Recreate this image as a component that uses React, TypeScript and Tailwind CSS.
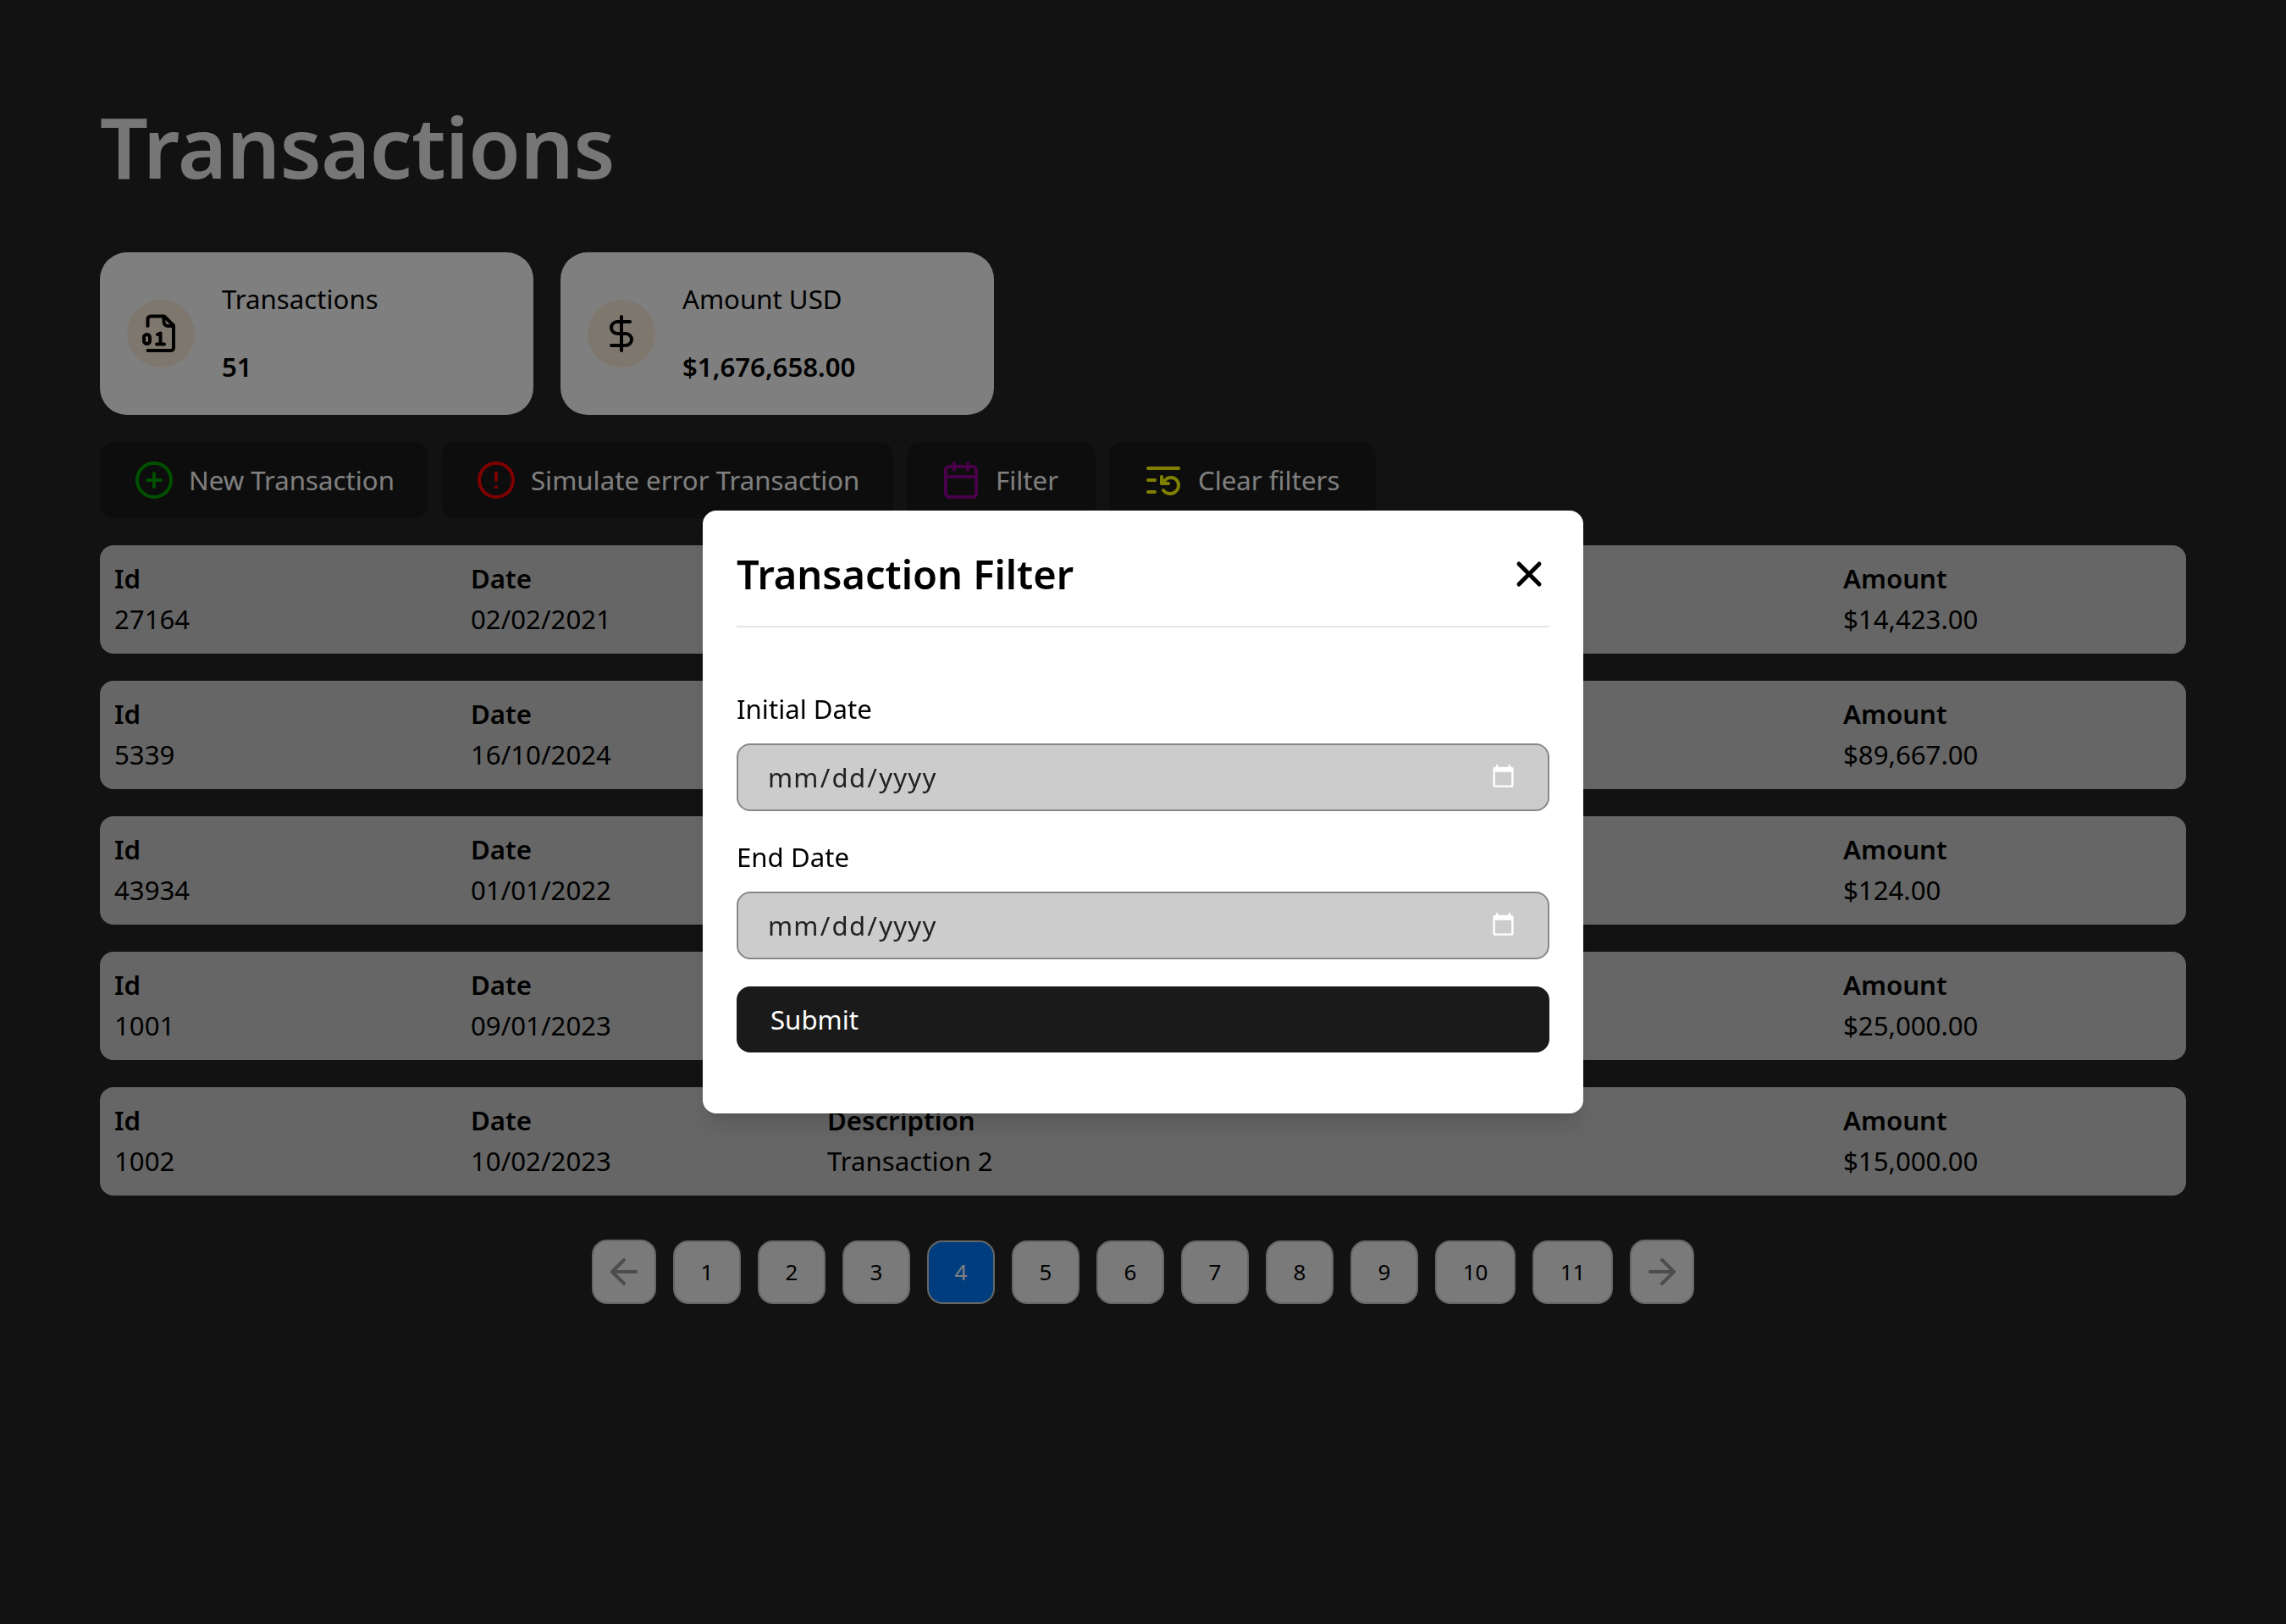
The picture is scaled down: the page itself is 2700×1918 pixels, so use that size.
import { ArrowLeft, ArrowRight, Calendar, CircleAlert, CirclePlus, DollarSign, ListRestart, X } from 'lucide-react';

const transactions = [
  { id: '27164', date: '02/02/2021', description: 'Transaction 27164', amount: '$14,423.00' },
  { id: '5339', date: '16/10/2024', description: 'Transaction 5339', amount: '$89,667.00' },
  { id: '43934', date: '01/01/2022', description: 'Transaction 43934', amount: '$124.00' },
  { id: '1001', date: '09/01/2023', description: 'Transaction 1', amount: '$25,000.00' },
  { id: '1002', date: '10/02/2023', description: 'Transaction 2', amount: '$15,000.00' },
];

const pages = ['1', '2', '3', '4', '5', '6', '7', '8', '9', '10', '11'];

function FileBinaryIcon() {
  return (
    <svg width="48" height="48" viewBox="0 0 48 48" fill="none" stroke="currentColor" strokeWidth="4" strokeLinecap="round" strokeLinejoin="round">
      <path d="M8.5 15V7A3.5 3.5 0 0 1 12 3.5H28L39 14.5V41a3 3 0 0 1-3 3H8.5" />
      <path d="M27.5 4v6a5 5 0 0 0 5 5h6.5" />
      <rect x="4" y="25" width="7" height="11" rx="3.5" />
      <path d="M20 25l3.5-1.5V36M19 36.5h9" />
    </svg>
  );
}

function StatCard({ icon, label, value }: { icon: React.ReactNode; label: string; value: string }) {
  return (
    <div className="w-[512px] h-[192px] bg-white rounded-[32px] p-8 flex items-center gap-8">
      <div className="w-20 h-20 rounded-full bg-[#fdeedd] flex items-center justify-center text-black">{icon}</div>
      <div className="text-black pb-[2px]">
        <p className="h-12 leading-[48px] mb-8">{label}</p>
        <p className="h-12 leading-[48px] font-semibold">{value}</p>
      </div>
    </div>
  );
}

function ActionButton({ icon, label, className }: { icon: React.ReactNode; label: string; className: string }) {
  return (
    <button className={`h-[90px] pl-10 rounded-2xl bg-[#1a1a1a] text-white flex items-center gap-[17px] ${className}`}>
      {icon}
      {label}
    </button>
  );
}

function DateField({ label }: { label: string }) {
  return (
    <div>
      <label className="block h-12 leading-[46px] mb-4 text-black">{label}</label>
      <input
        type="date"
        className="w-full h-20 pl-[34px] pr-[35px] rounded-2xl border-2 border-[#888888] bg-[#cccccc] text-[#222222] tracking-[1.2px] [color-scheme:dark]"
      />
    </div>
  );
}

export default function App() {
  return (
    <div className="relative min-h-[1918px] bg-[#242424] px-[118px] pt-[92px] text-[31.2px] font-['Noto_Sans',sans-serif]">
      <h1 className="h-[160px] leading-[160px] mb-[46px] text-[100px] font-semibold tracking-[-0.8px] text-[#eeeeee]">Transactions</h1>

      <div className="flex gap-8">
        <StatCard icon={<FileBinaryIcon />} label="Transactions" value="51" />
        <StatCard icon={<DollarSign size={48} strokeWidth={2} />} label="Amount USD" value="$1,676,658.00" />
      </div>

      <div className="flex gap-4 mt-8">
        <ActionButton className="w-[388px]" icon={<CirclePlus size={48} className="text-[#00a000]" strokeWidth={2} />} label="New Transaction" />
        <ActionButton className="w-[533px]" icon={<CircleAlert size={48} className="text-[#ff0000]" strokeWidth={2} />} label="Simulate error Transaction" />
        <ActionButton className="w-[223px]" icon={<Calendar size={48} className="text-[#900090]" strokeWidth={2} />} label="Filter" />
        <ActionButton className="w-[315px]" icon={<ListRestart size={48} className="text-[#ffff00]" strokeWidth={2} />} label="Clear filters" />
      </div>

      <div className="flex flex-col gap-8 mt-8">
        {transactions.map((t) => (
          <div key={t.id} className="h-32 px-[17px] pt-[15px] pb-[17px] rounded-2xl bg-[#cccccc] text-black grid grid-cols-[421px_421px_1200px_1fr] leading-[48px]">
            <div><p className="font-semibold">Id</p><p>{t.id}</p></div>
            <div><p className="font-semibold">Date</p><p>{t.date}</p></div>
            <div><p className="font-semibold">Description</p><p>{t.description}</p></div>
            <div><p className="font-semibold">Amount</p><p>{t.amount}</p></div>
          </div>
        ))}
      </div>

      <div className="flex items-center justify-center gap-5 mt-[52px] text-[26px]">
        <button className="w-[76px] h-[76px] rounded-[18px] border-2 border-[#cccccc] bg-[#f4f4f4] text-[#999999] flex items-center justify-center">
          <ArrowLeft size={48} strokeWidth={2} />
        </button>
        {pages.map((p) => (
          <button
            key={p}
            className={`h-[75px] rounded-[18px] border-2 border-[#cccccc] ${p.length > 1 ? 'w-[95px]' : 'w-20'} ${p === '4' ? 'bg-[#007bff] text-white' : 'bg-[#f4f4f4] text-black'}`}
          >
            {p}
          </button>
        ))}
        <button className="w-[76px] h-[76px] rounded-[18px] border-2 border-[#cccccc] bg-[#f4f4f4] text-[#999999] flex items-center justify-center">
          <ArrowRight size={48} strokeWidth={2} />
        </button>
      </div>

      <div className="fixed inset-0 bg-black/50 flex items-center justify-center">
        <div className="w-[1040px] rounded-2xl bg-white px-10 pt-10 pb-[72px] shadow-xl">
          <div className="h-[98px] pb-[26px] border-b-2 border-[#e5e5e5] flex items-center justify-between">
            <h2 className="text-[47px] font-semibold text-black">Transaction Filter</h2>
            <X size={48} strokeWidth={2.5} className="text-black" />
          </div>
          <div className="mt-[73px] flex flex-col gap-[31px]">
            <DateField label="Initial Date" />
            <DateField label="End Date" />
          </div>
          <button className="mt-8 w-full h-[78px] px-10 rounded-2xl bg-[#1a1a1a] text-white text-left">Submit</button>
        </div>
      </div>
    </div>
  );
}
